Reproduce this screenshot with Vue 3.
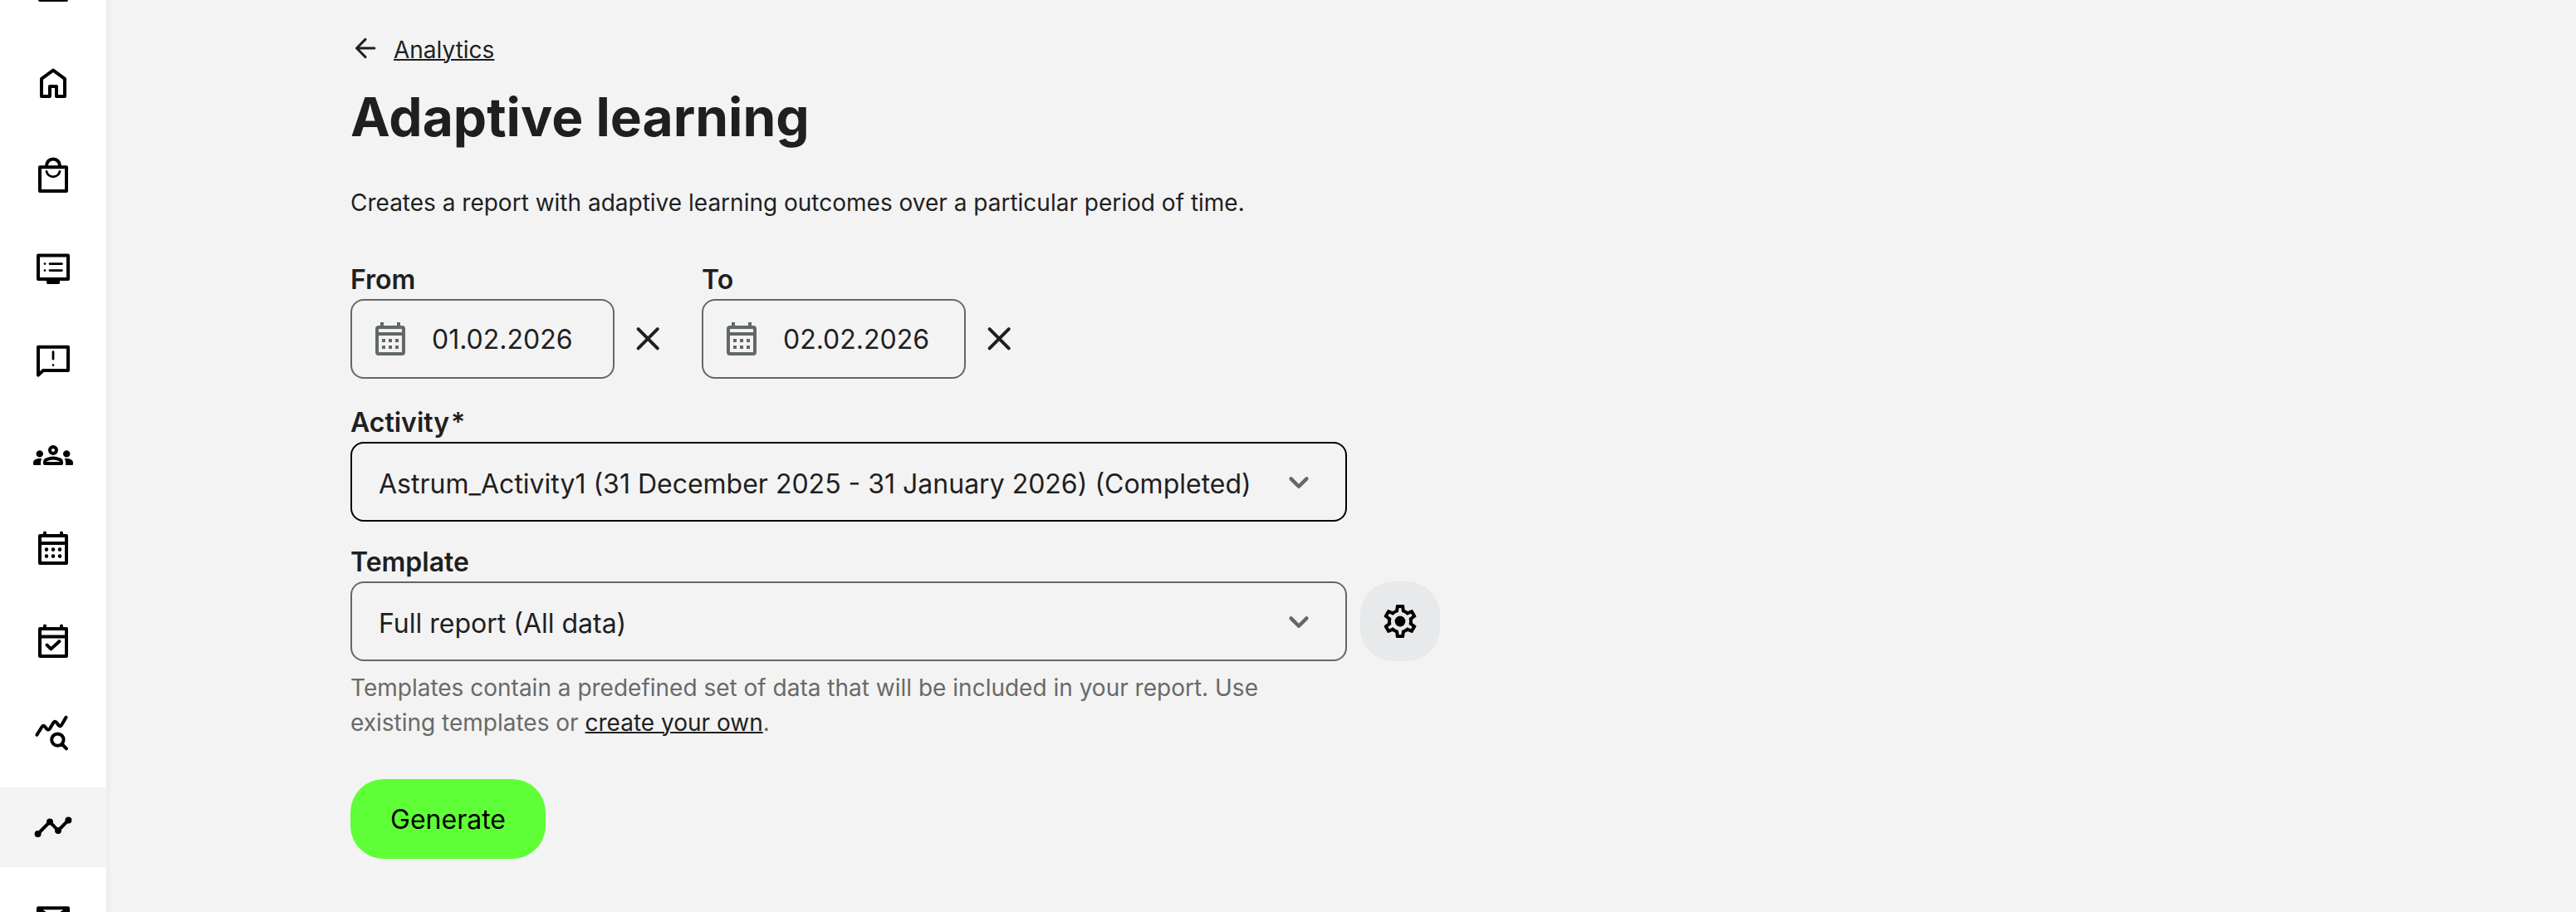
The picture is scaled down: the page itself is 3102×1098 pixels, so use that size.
<template>
  <div class="page">
    <nav class="sidebar">
      <a
        v-for="item in menu"
        :key="item.name"
        class="nav-item"
        :class="{ active: item.name === current }"
        :aria-label="item.name"
      >
        <svg class="icon" viewBox="0 0 24 24">
          <path v-if="item.line" class="line" :d="item.line" />
          <path v-if="item.thin" class="thin" :d="item.thin" />
          <path v-if="item.dots" class="dots" :d="item.dots" />
          <path v-if="item.fill" :d="item.fill" />
        </svg>
      </a>
    </nav>

    <main class="content">
      <div class="breadcrumb">
        <svg class="back" viewBox="0 0 24 24">
          <path d="M19.2 12H5M12 4.9L5 12l7 7.1" />
        </svg>
        <a class="link">Analytics</a>
      </div>
      <h1>Adaptive learning</h1>
      <p class="description">
        Creates a report with adaptive learning outcomes over a particular
        period of time.
      </p>

      <div class="dates">
        <div v-for="date in dates" :key="date.label" class="date">
          <label>{{ date.label }}</label>
          <div class="date-row">
            <div class="field date-field">
              <svg class="icon" viewBox="0 0 24 24">
                <path fill-rule="evenodd" :d="calendarPath" />
              </svg>
              <span>{{ date.value }}</span>
            </div>
            <svg class="icon clear" viewBox="0 0 24 24">
              <path d="M6.3 6.1l11.6 11.6M17.9 6.1L6.3 17.7" />
            </svg>
          </div>
        </div>
      </div>

      <label class="activity-label">Activity<span class="star">*</span></label>
      <div class="field select focused">
        <span>{{ activity }}</span>
        <svg class="icon chevron" viewBox="0 0 24 24">
          <path d="M7.3 10.2l4.7 4.7 4.7-4.7" />
        </svg>
      </div>

      <label class="template-label">Template</label>
      <div class="template-row">
        <div class="field select">
          <span>{{ template }}</span>
          <svg class="icon chevron" viewBox="0 0 24 24">
            <path d="M7.3 10.2l4.7 4.7 4.7-4.7" />
          </svg>
        </div>
        <button class="settings" aria-label="Settings">
          <svg class="icon" viewBox="0 0 24 24">
            <path fill-rule="evenodd" :d="gearPath" />
            <circle cx="12" cy="12" r="3.2" />
          </svg>
        </button>
      </div>
      <p class="hint">
        Templates contain a predefined set of data that will be included in your
        report. Use existing templates or
        <a class="link">create your own</a>.
      </p>

      <button class="generate">Generate</button>
    </main>
  </div>
</template>

<script setup>
import { ref } from "vue";

const current = ref("analytics");
const activity = ref(
  "Astrum_Activity1 (31 December 2025 - 31 January 2026) (Completed)"
);
const template = ref("Full report (All data)");
const dates = ref([
  { label: "From", value: "01.02.2026" },
  { label: "To", value: "02.02.2026" },
]);

const menu = [
  { name: "menu", line: "M4 4h16v14H4z" },
  { name: "home", line: "M5 20V9.4l7-5.1 7 5.1V20h-5v-6h-4v6z" },
  {
    name: "shop",
    line: "M4 6.6h16V21H4zM8 5.7a4 4 0 0 1 8 0",
    thin: "M8 9.2a4.1 4.1 0 0 0 8 0",
  },
  {
    name: "courses",
    line: "M3 3.7h18V18H3z",
    thin: "M7 8.8h.01M7 12.8h.01M10 8.8h7.2M10 12.8h7.2",
    fill: "M8 18h8v2.3q0 .7-.7.7H8.7q-.7 0-.7-.7z",
  },
  {
    name: "feedback",
    line: "M3 2.9h18V17H6l-3 2.8z",
    thin: "M12 5.8v4.3M12 13.8h.01",
  },
  {
    name: "groups",
    line: "M14 9a2 2 0 1 1-4 0a2 2 0 1 1 4 0zM7 17v-.6c0-.8.4-1.5 1.2-1.8 2.4-1.1 5.2-1.1 7.6 0 .8.3 1.2 1 1.2 1.8v.6z",
    fill: "M3.9 13.3a2.1 2.1 0 1 0 0-4.2 2.1 2.1 0 0 0 0 4.2zM5.1 14.1c-1.4-.3-2.7-.1-3.9.5A2 2 0 0 0 0 16.4v1q0 .6.6.6h3.9v-1.6c0-.8.2-1.6.6-2.3zM20.1 13.3a2.1 2.1 0 1 0 0-4.2 2.1 2.1 0 0 0 0 4.2zM18.9 14.1c1.4-.3 2.7-.1 3.9.5a2 2 0 0 1 1.2 1.8v1q0 .6-.6.6h-3.9v-1.6c0-.8-.2-1.6-.6-2.3z",
  },
  {
    name: "calendar",
    line: "M4 4.5h16V21H4zM4 9h16M7 2.7v1.5M17 2.7v1.5",
    dots: "M8 12.8h.01M12 12.8h.01M16 12.8h.01M8 16.8h.01M12 16.8h.01M16 16.8h.01",
  },
  {
    name: "tasks",
    line: "M4 4.5h16V21H4zM4 9.2h16M7 2.7v1.5M17 2.7v1.5M8.3 14.3l2.4 2.4 5-4.6",
  },
  {
    name: "statistics",
    line: "M2.2 12.4L5.2 7.6q.9-1.4 2 0l1 1.2q1 1.1 1.9-.3l2-3.4q.9-1.4 1.9-.2l1.3 1.7q1 1.1 1.8-.2l2.7-4.6M18.3 15.3a3.6 3.6 0 1 1-7.2 0a3.6 3.6 0 1 1 7.2 0zM17.4 18l2.6 2.7",
  },
  {
    name: "analytics",
    line: "M2.8 16l7.2-7.3 5 5.3 6.2-6.3",
    fill: "M4.8 16a2 2 0 1 1-4 0a2 2 0 1 1 4 0zM12 8.7a2 2 0 1 1-4 0a2 2 0 1 1 4 0zM17 14a2 2 0 1 1-4 0a2 2 0 1 1 4 0zM23.2 7.7a2 2 0 1 1-4 0a2 2 0 1 1 4 0z",
  },
  { name: "mail", line: "M3 4.6h18V19H3zM3.5 5.2l8.5 6 8.500-6" },
];

const calendarPath =
  "M5 4h1V2h2v2h8V2h2v2h1a2 2 0 0 1 2 2v14a2 2 0 0 1-2 2H5a2 2 0 0 1-2-2V6a2 2 0 0 1 2-2zM5 6v2h14V6zM5 10v10h14V10zM7 12h2v2H7zM11 12h2v2h-2zM15 12h2v2h-2zM7 16h2v2H7zM11 16h2v2h-2zM15 16h2v2h-2z";

const gearPath =
  "M19.43 12.98c.04-.32.07-.64.07-.98 0-.34-.03-.66-.07-.98l2.11-1.65c.19-.15.24-.42.12-.64l-2-3.46c-.09-.16-.26-.25-.44-.25-.06 0-.12.01-.17.03l-2.49 1c-.52-.4-1.08-.73-1.69-.98l-.38-2.65C14.46 2.18 14.25 2 14 2h-4c-.25 0-.46.18-.49.42l-.38 2.65c-.61.25-1.17.59-1.69.98l-2.49-1c-.06-.02-.12-.03-.18-.03-.17 0-.34.09-.43.25l-2 3.46c-.13.22-.07.49.12.64l2.11 1.65c-.04.32-.07.65-.07.98 0 .33.03.66.07.98l-2.11 1.65c-.19.15-.24.42-.12.64l2 3.46c.09.16.26.25.44.25.06 0 .12-.01.17-.03l2.49-1c.52.4 1.08.73 1.69.98l.38 2.65c.03.24.24.42.49.42h4c.25 0 .46-.18.49-.42l.38-2.65c.61-.25 1.17-.59 1.69-.98l2.49 1c.06.02.12.03.18.03.17 0 .34-.09.43-.25l2-3.46c.12-.22.07-.49-.12-.64l-2.11-1.65zm-1.98-1.71c.04.31.05.52.05.73 0 .21-.02.43-.05.73l-.14 1.13.89.7 1.08.84-.7 1.21-1.27-.51-1.04-.42-.9.68c-.43.32-.84.56-1.25.73l-1.06.43-.16 1.13-.2 1.35h-1.4l-.19-1.35-.16-1.13-1.06-.43c-.43-.18-.83-.41-1.23-.71l-.91-.7-1.06.43-1.27.51-.7-1.21 1.08-.84.89-.7-.14-1.13c-.03-.31-.05-.54-.05-.74s.02-.43.05-.73l.14-1.13-.89-.7-1.08-.84.7-1.21 1.27.51 1.04.42.9-.68c.43-.32.84-.56 1.25-.73l1.06-.43.16-1.13.2-1.35h1.39l.19 1.35.16 1.13 1.06.43c.43.18.83.41 1.23.71l.91.7 1.06-.43 1.27-.51.7 1.21-1.07.85-.89.7.14 1.13z";
</script>

<style>
body {
  margin: 0;
  background: #f3f3f3;
}
</style>

<style scoped>
.page {
  display: flex;
  height: 1098px;
  overflow: hidden;
  background: #f3f3f3;
  color: #1f1f1f;
  font-family: Inter, "Liberation Sans", sans-serif;
  font-size: 32px;
}

.sidebar {
  display: flex;
  flex: none;
  flex-direction: column;
  gap: 16px;
  width: 128px;
  height: 1220px;
  margin-top: -60px;
  background: #fff;
  box-shadow: 0 0 8px rgba(0, 0, 0, 0.06);
}

.nav-item {
  display: flex;
  flex: none;
  align-items: center;
  justify-content: center;
  height: 96px;
}

.nav-item.active {
  background: #f3f3f3;
}

.icon {
  display: block;
  flex: none;
  width: 48px;
  height: 48px;
}

.line,
.thin,
.dots {
  fill: none;
  stroke: #000;
  stroke-width: 2;
  stroke-linecap: round;
  stroke-linejoin: round;
}

.thin {
  stroke-width: 1.4;
}

.dots {
  stroke-width: 2.3;
}

.content {
  padding: 40px 0 0 294px;
}

.breadcrumb {
  display: flex;
  height: 40px;
  font-size: 28px;
  line-height: 40px;
}

.back {
  width: 36px;
  height: 36px;
  margin-right: 16px;
  fill: none;
  stroke: #1f1f1f;
  stroke-width: 2;
  stroke-linecap: round;
  stroke-linejoin: round;
}

.link {
  color: #1f1f1f;
  text-decoration: underline;
  text-decoration-thickness: 2px;
}

h1 {
  margin: 21px 0 0;
  font-size: 64px;
  font-weight: 700;
  line-height: 80px;
}

.description {
  margin: 42px 0 47px;
  font-size: 28px;
  line-height: 42px;
}

label {
  display: block;
  padding-top: 2px;
  font-weight: 600;
  line-height: 46px;
}

.star {
  margin-left: 2px;
}

.dates {
  display: flex;
}

.date {
  width: 423px;
}

.date-row {
  display: flex;
  align-items: center;
}

.field {
  display: flex;
  box-sizing: border-box;
  align-items: center;
  height: 96px;
  border: 2px solid #646768;
  border-radius: 16px;
}

.date-field {
  width: 318px;
  padding-left: 22px;
}

.date-field .icon {
  margin-right: 26px;
  fill: #626868;
}

.clear {
  margin-left: 16px;
  stroke: #1f1f1f;
  stroke-width: 2;
  stroke-linecap: round;
}

.activity-label {
  margin-top: 28px;
}

.template-label {
  margin-top: 24px;
}

.select {
  justify-content: space-between;
  width: 1200px;
  padding: 0 32px;
}

.select span {
  padding-top: 4px;
}

.focused {
  border-color: #000;
}

.chevron {
  fill: none;
  stroke: #646768;
  stroke-width: 2.2;
  stroke-linecap: round;
  stroke-linejoin: round;
}

.template-row {
  display: flex;
  gap: 16px;
}

button {
  height: 96px;
  padding: 0;
  border: none;
  color: #000;
  font: inherit;
}

.settings {
  display: flex;
  align-items: center;
  justify-content: center;
  width: 96px;
  border-radius: 40px;
  background: #e7e9ea;
}

.hint {
  width: 1200px;
  margin: 11px 0 47px;
  color: #696969;
  font-size: 28px;
  line-height: 42px;
}

.generate {
  width: 235px;
  border-radius: 40px;
  background: #5eff36;
}
</style>
